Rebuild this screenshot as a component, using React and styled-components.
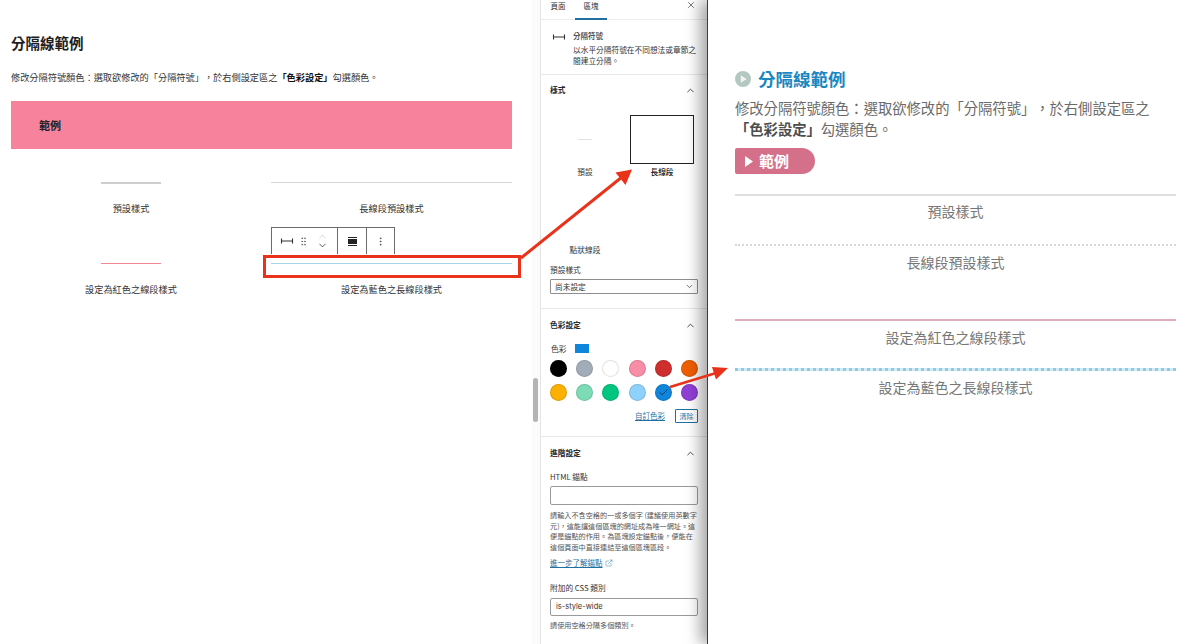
import React from 'react';
import styled, { createGlobalStyle } from 'styled-components';
import { Check, ChevronDown, ChevronUp, EllipsisVertical, ExternalLink, GripVertical, X } from 'lucide-react';

const GlobalStyle = createGlobalStyle`
html, body {
  margin: 0;
  height: 644px;
  overflow: hidden;
  background: #fff;
}
* { box-sizing: border-box; }
body {
  font-family: "Noto Sans CJK TC", "Liberation Sans", sans-serif;
  color: #333;
  text-spacing-trim: space-all;
}
`;

const SeparatorIcon = ({ size = 14 }) => (
  <svg width={size} height={size} viewBox="0 0 14 14" fill="none" stroke="#333" strokeWidth="1.1">
    <path d="M1.5 4.5v5M12.5 4.5v5M1.5 7h11" />
  </svg>
);

const palette = [
  '#000000', '#a3adba', '#ffffff', '#f78da7', '#cf2e2e', '#f05f00',
  '#fcb000', '#7bdcb5', '#00c67f', '#8ed1fc', '#0f86dc', '#9140d6',
];

const App = () => (
  <Page>
    <GlobalStyle />
    <Editor>
      <EditorTitle>分隔線範例</EditorTitle>
      <EditorText>修改分隔符號顏色：選取欲修改的「分隔符號」，於右側設定區之<b>「色彩設定」</b>勾選顏色。</EditorText>
      <PinkBlock>範例</PinkBlock>
      <EditorGrid>
        <EditorCell>
          <ShortLine $thick />
          <Caption>預設樣式</Caption>
        </EditorCell>
        <EditorCell>
          <WideLine />
          <Caption>長線段預設樣式</Caption>
        </EditorCell>
        <EditorCell>
          <ShortLine $color="#f08a94" />
          <Caption>設定為紅色之線段樣式</Caption>
        </EditorCell>
        <EditorCell>
          <Toolbar>
            <MainToolGroup>
              <SeparatorIcon />
              <GripVertical size={11} strokeWidth={1.2} color="#444" />
              <Mover>
                <ChevronUp size={11} strokeWidth={1} color="#999" />
                <ChevronDown size={11} strokeWidth={1.6} color="#222" />
              </Mover>
            </MainToolGroup>
            <ToolGroup $width={29}>
              <AlignIcon />
            </ToolGroup>
            <ToolGroup $width={28}>
              <EllipsisVertical size={11} strokeWidth={1.4} color="#333" />
            </ToolGroup>
          </Toolbar>
          <WideLine $color="#a8d5e6" />
          <Caption>設定為藍色之長線段樣式</Caption>
        </EditorCell>
      </EditorGrid>
    </Editor>

    <ScrollTrack>
      <ScrollThumb />
    </ScrollTrack>

    <Sidebar>
      <Tabs>
        <Tab>頁面</Tab>
        <Tab $active>區塊</Tab>
        <CloseButton><X size={10} strokeWidth={1.6} /></CloseButton>
      </Tabs>

      <BlockCard>
        <SeparatorIcon />
        <div>
          <BlockName>分隔符號</BlockName>
          <BlockDesc>以水平分隔符號在不同想法或章節之間建立分隔。</BlockDesc>
        </div>
      </BlockCard>

      <StylesSection>
        <SectionHead>樣式<ChevronUp size={11} strokeWidth={1.8} /></SectionHead>
        <StyleGrid>
          <StyleOption>
            <StylePreview><PreviewLine /></StylePreview>
            <StyleName>預設</StyleName>
          </StyleOption>
          <StyleOption>
            <StylePreview $selected />
            <StyleName $selected>長線段</StyleName>
          </StyleOption>
          <StyleOption>
            <StylePreview />
            <StyleName>點狀線段</StyleName>
          </StyleOption>
        </StyleGrid>
        <FieldLabel $top={9}>預設樣式</FieldLabel>
        <SelectBox>
          尚未設定
          <ChevronDown size={9} strokeWidth={1.8} />
        </SelectBox>
      </StylesSection>

      <Section>
        <SectionHead>色彩設定<ChevronUp size={11} strokeWidth={1.8} /></SectionHead>
        <ColorLabel>色彩<CurrentColor /></ColorLabel>
        <Palette>
          {palette.map((c) => (
            <Swatch key={c} $color={c}>
              {c === '#0f86dc' && <Check size={11} strokeWidth={1.4} color="#111" />}
            </Swatch>
          ))}
        </Palette>
        <ColorActions>
          <TextLink>自訂色彩</TextLink>
          <ClearButton>清除</ClearButton>
        </ColorActions>
      </Section>

      <LastSection>
        <SectionHead>進階設定<ChevronUp size={11} strokeWidth={1.8} /></SectionHead>
        <FieldLabel $top={12}>HTML 錨點</FieldLabel>
        <TextInput $top={3} $height={19} />
        <HelpText $top={5}>請輸入不含空格的一或多個字 (建議使用英數字元)，這能讓這個區塊的網址成為唯一網址。這便是錨點的作用。為區塊設定錨點後，便能在這個頁面中直接連結至這個區塊區段。</HelpText>
        <LearnMore>
          <TextLink>進一步了解錨點</TextLink>
          <ExternalLink size={8} strokeWidth={1.3} color="#1f6f9f" />
        </LearnMore>
        <FieldLabel $top={14}>附加的 CSS 類別</FieldLabel>
        <TextInput $top={4} $height={18}>is-style-wide</TextInput>
        <HelpText $top={4}>請使用空格分隔多個類別。</HelpText>
      </LastSection>
    </Sidebar>

    <Preview>
      <PreviewTitle>
        <svg width="16" height="16" viewBox="0 0 16 16">
          <circle cx="8" cy="8" r="8" fill="#b4c8c2" />
          <path d="M5.8 4.2 11.6 8l-5.8 3.8z" fill="#f1f5f3" />
        </svg>
        分隔線範例
      </PreviewTitle>
      <PreviewText>修改分隔符號顏色：選取欲修改的「分隔符號」，於右側設定區之<b>「色彩設定」</b>勾選顏色。</PreviewText>
      <Badge>
        <svg width="8" height="11" viewBox="0 0 8 11">
          <path d="M0 0 8 5.5 0 11z" fill="#fff" />
        </svg>
        範例
      </Badge>
      <Rule $top={20} $color="#dedede" />
      <RuleCaption $top={5}>預設樣式</RuleCaption>
      <Rule $top={23} $dotted $color="#d8d8d8" />
      <RuleCaption $top={6}>長線段預設樣式</RuleCaption>
      <Rule $top={47} $color="#e3aebb" />
      <RuleCaption $top={6}>設定為紅色之線段樣式</RuleCaption>
      <Rule $top={21} $dotted $thick $color="#8ccbe2" />
      <RuleCaption $top={6}>設定為藍色之長線段樣式</RuleCaption>
    </Preview>

    <Highlight />
    <Arrows viewBox="0 0 1200 644">
      <path d="M521 258 622 177" stroke="#e8321a" strokeWidth="3" fill="none" />
      <path d="M632 169.5 625.5 185 615.5 172.5z" fill="#e8321a" />
      <path d="M670 387 716 373" stroke="#e8321a" strokeWidth="2.5" fill="none" />
      <path d="M728 368 712 367 716 379.5z" fill="#e8321a" />
    </Arrows>
  </Page>
);

export default App;

// page

const Page = styled.div`
position: relative;
display: flex;
width: 1200px;
height: 644px;
overflow: hidden;
background: #fff;
`;

// editor

const Editor = styled.main`
width: 532px;
flex-shrink: 0;
padding: 33px 20px 0 11px;
color: #222;
`;

const EditorTitle = styled.h2`
margin: 0;
font-size: 14.5px;
line-height: 20px;
font-weight: 700;
color: #1e1e1e;
`;

const EditorText = styled.p`
margin: 17px 0 0;
font-size: 9.2px;
line-height: 14px;
white-space: nowrap;
color: #333;
b { font-weight: 700; color: #111; }
`;

const PinkBlock = styled.div`
margin-top: 17px;
height: 48px;
padding-left: 28px;
background: #f7829c;
font-size: 11px;
font-weight: 700;
line-height: 48px;
color: #222;
`;

const EditorGrid = styled.div`
display: grid;
grid-template-columns: 240px 241px;
grid-auto-rows: 81px;
column-gap: 20px;
margin-top: 33px;
`;

const EditorCell = styled.div`
position: relative;
text-align: center;
`;

const ShortLine = styled.div`
width: 60px;
height: ${({ $thick }) => ($thick ? 2 : 1)}px;
margin: 0 auto ${({ $thick }) => ($thick ? -1 : 0)}px;
background: ${({ $color }) => $color || '#cfcfcf'};
`;

const WideLine = styled.div`
height: 1px;
background: ${({ $color }) => $color || '#d4d4d4'};
`;

const Caption = styled.div`
margin-top: 18px;
font-size: 9.2px;
line-height: 14px;
color: #333;
`;

const Toolbar = styled.div`
position: absolute;
left: 0;
bottom: calc(100% + 9px);
display: flex;
height: 27px;
background: #fff;
border: 1px solid #6b6b6b;
border-bottom: none;
`;

const ToolGroup = styled.div`
display: flex;
align-items: center;
justify-content: center;
width: ${({ $width }) => $width}px;
& + & { border-left: 1px solid #6b6b6b; }
`;

const MainToolGroup = styled(ToolGroup)`
justify-content: flex-start;
width: 65px;
padding-left: 8px;
gap: 4px;
`;

const Mover = styled.div`
display: flex;
flex-direction: column;
margin-left: 4px;
svg { display: block; margin: -1px 0; }
`;

const AlignIcon = styled.span`
width: 9px;
height: 9px;
border-top: 1px solid #222;
border-bottom: 1px solid #222;
padding: 1px 0;
background: #222;
background-clip: content-box;
`;

// scrollbar between editor and sidebar

const ScrollTrack = styled.div`
width: 8px;
flex-shrink: 0;
padding: 378px 2px 0 1px;
background: #fbfbfb;
`;

const ScrollThumb = styled.div`
height: 44px;
border-radius: 3px;
background: #b4b4b4;
`;

// sidebar

const Sidebar = styled.aside`
width: 167px;
flex-shrink: 0;
border-left: 1px solid #e4e4e4;
background: #fff;
font-size: 7.7px;
color: #333;
`;

const Tabs = styled.nav`
position: relative;
display: flex;
height: 20px;
padding-left: 1px;
gap: 1px;
border-bottom: 1px solid #ededed;
`;

const Tab = styled.div`
width: 32px;
height: 20px;
text-align: center;
font-size: 7.5px;
line-height: 11px;
color: #333;
border-bottom: 2px solid ${({ $active }) => ($active ? '#1f6f9f' : 'transparent')};
`;

const CloseButton = styled.div`
position: absolute;
right: 11px;
top: 0;
line-height: 0;
`;

const BlockCard = styled.div`
display: flex;
gap: 7px;
height: 55px;
padding: 10px 9px 0 11px;
border-bottom: 1px solid #e8e8e8;
svg { flex-shrink: 0; }
`;

const BlockName = styled.div`
font-size: 7.5px;
font-weight: 500;
line-height: 12px;
`;

const BlockDesc = styled.div`
margin-top: 2px;
font-size: 7.7px;
line-height: 11px;
color: #333;
`;

const Section = styled.section`
padding: 10px 9px 13px 9px;
border-bottom: 1px solid #e8e8e8;
`;

const StylesSection = styled(Section)`
padding-top: 9px;
padding-bottom: 14px;
`;

const LastSection = styled(Section)`
border-bottom: none;
`;

const SectionHead = styled.h3`
display: flex;
align-items: center;
justify-content: space-between;
margin: 0;
padding-right: 2px;
font-size: 7.7px;
font-weight: 700;
line-height: 12px;
color: #2a2a2a;
`;

const StyleGrid = styled.div`
display: grid;
grid-template-columns: 70px 64px;
column-gap: 10px;
row-gap: 16px;
margin-top: 19px;
`;

const StyleOption = styled.div`
text-align: center;
`;

const StylePreview = styled.div`
display: flex;
align-items: center;
justify-content: center;
height: 49px;
background: #fff;
border: ${({ $selected }) => ($selected ? '1.5px solid #222' : 'none')};
`;

const PreviewLine = styled.div`
width: 14px;
height: 1px;
background: #e2e2e2;
`;

const StyleName = styled.div`
margin-top: 3px;
font-size: 7.7px;
line-height: 10px;
font-weight: ${({ $selected }) => ($selected ? 500 : 400)};
color: ${({ $selected }) => ($selected ? '#111' : '#333')};
`;

const FieldLabel = styled.div`
margin-top: ${({ $top }) => $top}px;
font-size: 7.7px;
line-height: 12px;
color: #333;
`;

const SelectBox = styled.div`
display: flex;
align-items: center;
justify-content: space-between;
height: 15px;
margin-top: 3px;
padding: 0 3px 0 4px;
border: 1px solid #8d8d8d;
border-radius: 1px;
font-size: 7.7px;
`;

const ColorLabel = styled.div`
display: flex;
align-items: center;
gap: 9px;
height: 10px;
margin-top: 12px;
padding-left: 1px;
font-size: 7.7px;
`;

const CurrentColor = styled.span`
width: 14px;
height: 9px;
background: #0f86dc;
`;

const Palette = styled.div`
display: grid;
grid-template-columns: repeat(6, 17px);
column-gap: 9.2px;
row-gap: 7px;
margin: 7px 0 0 0;
`;

const Swatch = styled.div`
display: flex;
align-items: center;
justify-content: center;
width: 17px;
height: 17px;
border-radius: 50%;
background: ${({ $color }) => $color};
box-shadow: inset 0 0 0 1px rgba(0, 0, 0, 0.12);
`;

const ColorActions = styled.div`
display: flex;
align-items: center;
justify-content: flex-end;
gap: 10px;
height: 14px;
margin-top: 8px;
`;

const TextLink = styled.span`
font-size: 7.5px;
line-height: 10px;
color: #1f6f9f;
text-decoration: underline;
`;

const ClearButton = styled.div`
width: 23px;
height: 14px;
border: 1px solid #1f6f9f;
border-radius: 1px;
text-align: center;
font-size: 7px;
line-height: 12px;
color: #1f6f9f;
`;

const TextInput = styled.div`
height: ${({ $height }) => $height}px;
margin-top: ${({ $top }) => $top}px;
padding-left: 5px;
border: 1px solid #9a9a9a;
border-radius: 2px;
font-family: "Inter", "Liberation Sans", sans-serif;
font-size: 7.5px;
line-height: ${({ $height }) => $height - 2}px;
color: #333;
`;

const HelpText = styled.div`
margin-top: ${({ $top }) => $top}px;
font-size: 7.15px;
line-height: 10.6px;
color: #555;
`;

const LearnMore = styled.div`
display: flex;
align-items: center;
gap: 2px;
height: 10px;
margin-top: 6px;
`;

// right panel

const Preview = styled.section`
position: relative;
flex: 1;
padding: 67px 24px 0 27px;
background: #fff;
border-left: 1.5px solid #3d3d3d;
box-shadow: -7px 0 14px rgba(0, 0, 0, 0.35);
`;

const PreviewTitle = styled.h2`
display: flex;
align-items: center;
gap: 7px;
margin: 0;
font-size: 17.5px;
font-weight: 700;
line-height: 24px;
color: #1b87c0;
`;

const PreviewText = styled.p`
margin: 6px 0 0;
font-size: 14.3px;
line-height: 21px;
color: #6a6a6a;
b { font-weight: 700; color: #4d4d4d; }
`;

const Badge = styled.div`
display: flex;
align-items: center;
gap: 6px;
width: 80px;
height: 26px;
margin-top: 9px;
padding: 0 0 2px 10px;
border-radius: 2px 13px 13px 2px;
background: #d4708a;
font-size: 15px;
font-weight: 700;
color: #fff;
svg { margin-top: 2px; }
`;

const Rule = styled.div`
margin-top: ${({ $top }) => $top}px;
height: ${({ $thick }) => ($thick ? 3 : 2)}px;
border-top: ${({ $thick }) => ($thick ? 3 : 2)}px ${({ $dotted }) => ($dotted ? 'dotted' : 'solid')} ${({ $color }) => $color};
background: ${({ $thick }) => ($thick ? '#d5ebf4' : 'transparent')};
`;

const RuleCaption = styled.div`
margin-top: ${({ $top }) => $top}px;
text-align: center;
font-size: 14px;
line-height: 20px;
color: #777;
`;

// annotations drawn over the screenshot

const Highlight = styled.div`
position: absolute;
left: 263px;
top: 255px;
width: 258px;
height: 23px;
border: 3px solid #e8321a;
`;

const Arrows = styled.svg`
position: absolute;
inset: 0;
width: 1200px;
height: 644px;
pointer-events: none;
`;
